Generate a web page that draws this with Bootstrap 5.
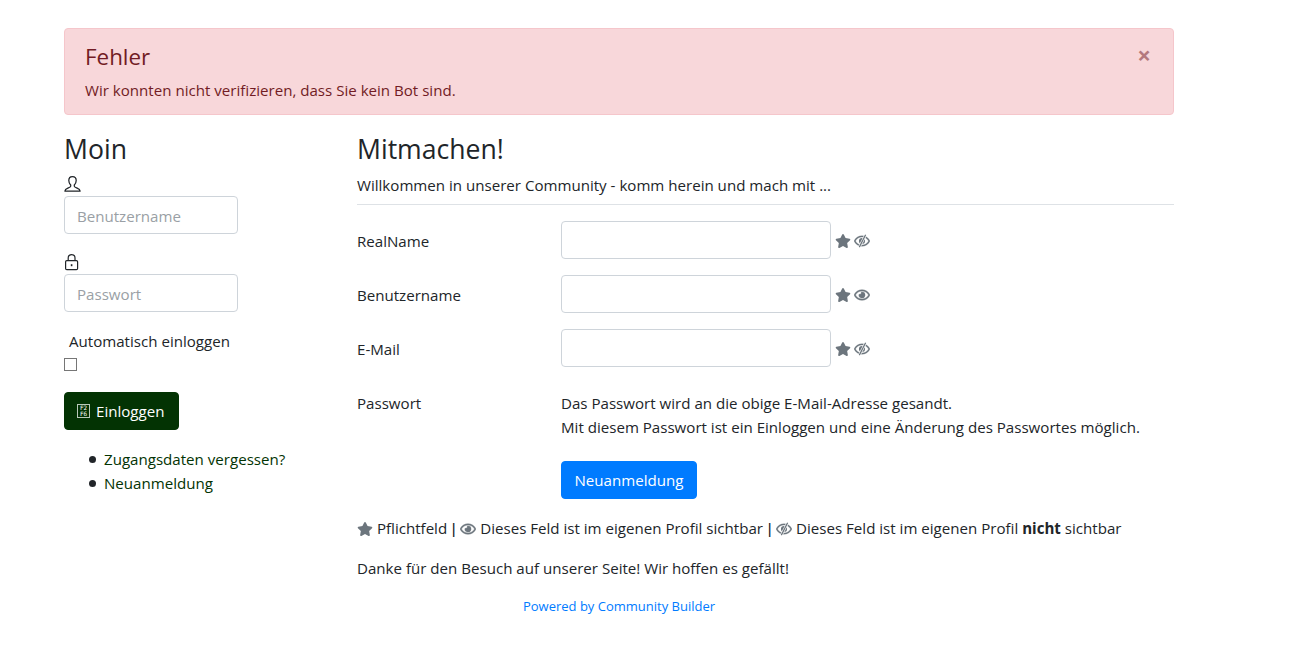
<!DOCTYPE html>
<html lang="de">
<head>
  <meta charset="UTF-8"/>
  <meta name="viewport" content="width=device-width, initial-scale=1.0"/>
  <title>Mitmachen</title>
  <link href="https://cdn.jsdelivr.net/npm/bootstrap@5.3.0/dist/css/bootstrap.min.css" rel="stylesheet"/>
  <style>
    body {
      font-family: "Open Sans", "Noto Sans", sans-serif;
      font-size: 15.1px;
      line-height: 24px;
      color: #212529;
      background: #fff;
    }
    .page-wrap {
      width: 1110px;
      margin-left: 64px;
      padding-top: 28px;
    }
    .err-box {
      background: #f8d7da;
      border: 1px solid #f5c6cb;
      border-radius: 4px;
      color: #721c24;
      padding: 12px 20px;
      height: 87px;
      margin-bottom: 17px;
    }
    .err-box h4 {
      font-size: 22.4px;
      line-height: 29px;
      font-weight: 400;
      margin: 1px 0 7px;
      font-family: inherit;
    }
    .err-close {
      font-size: 24px;
      line-height: 24px;
      color: #721c24;
      opacity: .5;
      font-weight: 700;
      padding: 0 2px;
      margin-top: 2px;
      border: 0;
      background: none;
    }
    .side-col { width: 293px; flex: none; }
    .main-col { flex: 1 1 0; min-width: 0; }
    .head-txt {
      font-size: 26.6px;
      line-height: 34px;
      font-weight: 400;
      margin-bottom: 6px;
      font-family: inherit;
    }
    .intro-txt { padding-top: 1px; }
    .side-input {
      width: 174px;
      height: 38px;
      font-size: 15.1px;
      padding: 7px 12px 5px;
      border: 1px solid #ced4da;
      border-radius: 4px;
    }
    .main-input {
      width: 270px;
      height: 38px;
      border: 1px solid #ced4da;
      border-radius: 4px;
    }
    .form-control::placeholder { color: #9a9fa5; }
    .lbl-col { width: 204px; flex: none; }
    .lbl-nudge { padding-top: 2px; }
    .row-gap { margin-bottom: 16px; min-height: 38px; }
    .row-gap-wide { margin-bottom: 22px; }
    .row-gap-btn { margin-bottom: 17px; }
    .ico-line { height: 24px; display: block; }
    .auto-label { padding: 1px 0 0 5px; }
    .auto-check {
      appearance: none;
      width: 13px;
      height: 13px;
      display: block;
      margin: 5px 0 21px;
      border: 1px solid #767676;
      background: #fff;
    }
    .btn-einloggen {
      background: #033303;
      border: 1px solid #033303;
      color: #fff;
      font-size: 15.1px;
      line-height: 24px;
      padding: 6px 12px;
      border-radius: 4px;
      margin-bottom: 17px;
      display: flex;
      align-items: center;
      height: 38px;
      width: 115px;
    }
    .btn-einloggen:hover { background: #033303; color: #fff; }
    .btn-neu {
      background: #007bff;
      border: 1px solid #007bff;
      color: #fff;
      font-size: 15.1px;
      line-height: 24px;
      padding: 6px 12.5px;
      border-radius: 4px;
    }
    .tofu {
      display: block;
      flex: none;
      width: 13px;
      height: 14px;
      border: 1px solid #b9c8b9;
      font-family: "DejaVu Sans Mono", monospace;
      font-size: 6px;
      line-height: 6px;
      text-align: center;
      margin-right: 6px;
    }
    .side-links { padding-left: 40px; margin: 0; list-style: none; }
    .side-links li::before {
      content: "";
      display: inline-block;
      width: 7px;
      height: 7px;
      margin-left: -15px;
      margin-right: 8px;
      border-radius: 50%;
      background: #212529;
      vertical-align: 2px;
    }
    .side-links a { color: #033303; text-decoration: none; }
    .field-ic { fill: #6c757d; flex: none; margin-top: 2px; }
    .ic-star { width: 16px; height: 14px; margin-left: 4px; }
    .ic-eye { width: 16px; height: 14px; margin-left: 3px; }
    .legend-line svg { vertical-align: -2px; margin: 0; }
    .bar-sep { font-weight: 600; margin: 0 -1.5px; }
    .powered { font-size: 13px; margin-top: 14px; }
    .powered a { color: #007bff; text-decoration: none; }
    .intro-rule { margin: 7px 0 16px; border: 0; border-top: 1px solid #dee2e6; opacity: 1; }
  </style>
</head>
<body>

<svg width="0" height="0" class="position-absolute">
  <symbol id="i-star" viewBox="0 0 576 512"><path d="M259.3 17.8L194 150.2 47.9 171.5c-26.2 3.8-36.7 36.1-17.7 54.6l105.7 103-25 145.5c-4.5 26.3 23.2 46 46.4 33.7L288 439.6l130.7 68.7c23.2 12.2 50.9-7.4 46.4-33.7l-25-145.5 105.7-103c19-18.5 8.5-50.8-17.7-54.6L382 150.2 316.7 17.8c-11.7-23.6-45.6-23.9-57.4 0z"/></symbol>
  <symbol id="i-eye" viewBox="0 0 576 512"><path stroke="#6c757d" stroke-width="16" d="M288 144a110.94 110.94 0 0 0-31.24 5 55.4 55.4 0 0 1 7.24 27 56 56 0 0 1-56 56 55.4 55.4 0 0 1-27-7.24A111.71 111.71 0 1 0 288 144zm284.52 97.4C518.29 135.59 410.93 64 288 64S57.68 135.64 3.48 241.41a32.35 32.35 0 0 0 0 29.19C57.71 376.41 165.07 448 288 448s230.32-71.64 284.52-177.41a32.35 32.35 0 0 0 0-29.19zM288 400c-98.65 0-189.09-55-237.93-144C98.91 167 189.34 112 288 112s189.09 55 237.93 144C477.1 345 386.66 400 288 400z"/></symbol>
  <symbol id="i-eye-off" viewBox="0 0 576 512">
    <path stroke="#6c757d" stroke-width="10" d="M572.52 241.4C518.29 135.59 410.93 64 288 64S57.68 135.64 3.48 241.41a32.35 32.35 0 0 0 0 29.19C57.71 376.41 165.07 448 288 448s230.32-71.64 284.52-177.41a32.35 32.35 0 0 0 0-29.19zM288 400c-98.65 0-189.09-55-237.93-144C98.91 167 189.34 112 288 112s189.09 55 237.93 144C477.1 345 386.66 400 288 400z"/>
    <path d="M288 144a112 112 0 1 0 112 112 112 112 0 0 0-112-112z"/>
    <path stroke="#fff" stroke-width="90" d="M420 30L190 480"/>
    <path stroke="#6c757d" stroke-width="46" d="M420 30L190 480"/>
  </symbol>
</svg>

<div class="page-wrap">
  <div class="err-box d-flex justify-content-between">
    <div>
      <h4>Fehler</h4>
      <div>Wir konnten nicht verifizieren, dass Sie kein Bot sind.</div>
    </div>
    <button class="err-close align-self-start" type="button" aria-label="Close">×</button>
  </div>

  <div class="d-flex">
    <!-- login column -->
    <div class="side-col">
      <h3 class="head-txt">Moin</h3>
      <svg class="ico-line" width="17" height="24" viewBox="0 0 17 24" fill="none" stroke="#212529" stroke-width="1.25"><path d="M8.5 4.5c-2.4 0-3.7 1.8-3.7 4 0 1.8.9 3.5 1.9 4.5v1.2c0 .7-1 1.1-2.4 1.7-1.7.7-3.3 1.2-3.3 2.8v.3h15v-.3c0-1.6-1.6-2.1-3.3-2.8-1.4-.6-2.4-1-2.4-1.7V13c1-1 1.9-2.7 1.9-4.5 0-2.2-1.3-4-3.7-4z"/></svg>
      <input class="form-control side-input mb-3" type="text" placeholder="Benutzername"/>
      <svg class="ico-line" width="17" height="24" viewBox="0 0 17 24" fill="none" stroke="#212529" stroke-width="1.2"><rect x="1.6" y="10.6" width="12" height="9" rx="1.2"/><path d="M4.2 10.5V8a3.4 3.4 0 0 1 6.8 0v2.5"/><path d="M7.6 14.2v2" stroke-width="1.6"/></svg>
      <input class="form-control side-input mb-3" type="text" placeholder="Passwort"/>
      <label class="d-block auto-label" for="autologin">Automatisch einloggen</label>
      <input class="auto-check" id="autologin" type="checkbox"/>
      <button class="btn btn-einloggen" type="button"><span class="tofu">F2<br/>F6</span>Einloggen</button>
      <ul class="side-links">
        <li><a href="#">Zugangsdaten vergessen?</a></li>
        <li><a href="#">Neuanmeldung</a></li>
      </ul>
    </div>

    <!-- registration column -->
    <div class="main-col">
      <h3 class="head-txt">Mitmachen!</h3>
      <div class="intro-txt">Willkommen in unserer Community - komm herein und mach mit ...</div>
      <hr class="intro-rule"/>

      <div class="d-flex align-items-center row-gap">
        <div class="lbl-col lbl-nudge">RealName</div>
        <input class="form-control main-input" type="text"/>
        <svg class="ic-star field-ic"><use href="#i-star"/></svg>
        <svg class="ic-eye field-ic"><use href="#i-eye-off"/></svg>
      </div>
      <div class="d-flex align-items-center row-gap">
        <div class="lbl-col lbl-nudge">Benutzername</div>
        <input class="form-control main-input" type="text"/>
        <svg class="ic-star field-ic"><use href="#i-star"/></svg>
        <svg class="ic-eye field-ic"><use href="#i-eye"/></svg>
      </div>
      <div class="d-flex align-items-center row-gap">
        <div class="lbl-col lbl-nudge">E-Mail</div>
        <input class="form-control main-input" type="text"/>
        <svg class="ic-star field-ic"><use href="#i-star"/></svg>
        <svg class="ic-eye field-ic"><use href="#i-eye-off"/></svg>
      </div>
      <div class="d-flex row-gap row-gap-wide pt-2">
        <div class="lbl-col">Passwort</div>
        <div>Das Passwort wird an die obige E-Mail-Adresse gesandt.<br/>Mit diesem Passwort ist ein Einloggen und eine Änderung des Passwortes möglich.</div>
      </div>
      <div class="d-flex row-gap row-gap-btn">
        <div class="lbl-col"></div>
        <button class="btn btn-neu" type="button">Neuanmeldung</button>
      </div>
      <div class="mb-3 legend-line">
        <svg class="ic-star field-ic"><use href="#i-star"/></svg> Pflichtfeld <span class="bar-sep">|</span> <svg class="ic-eye field-ic"><use href="#i-eye"/></svg> Dieses Feld ist im eigenen Profil sichtbar <span class="bar-sep">|</span> <svg class="ic-eye field-ic"><use href="#i-eye-off"/></svg> Dieses Feld ist im eigenen Profil <strong>nicht</strong> sichtbar
      </div>
      <div>Danke für den Besuch auf unserer Seite! Wir hoffen es gefällt!</div>
    </div>
  </div>
  <div class="powered text-center"><a href="#">Powered by Community Builder</a></div>
</div>

<script src="https://cdn.jsdelivr.net/npm/bootstrap@5.3.0/dist/js/bootstrap.bundle.min.js"></script>
</body>
</html>
